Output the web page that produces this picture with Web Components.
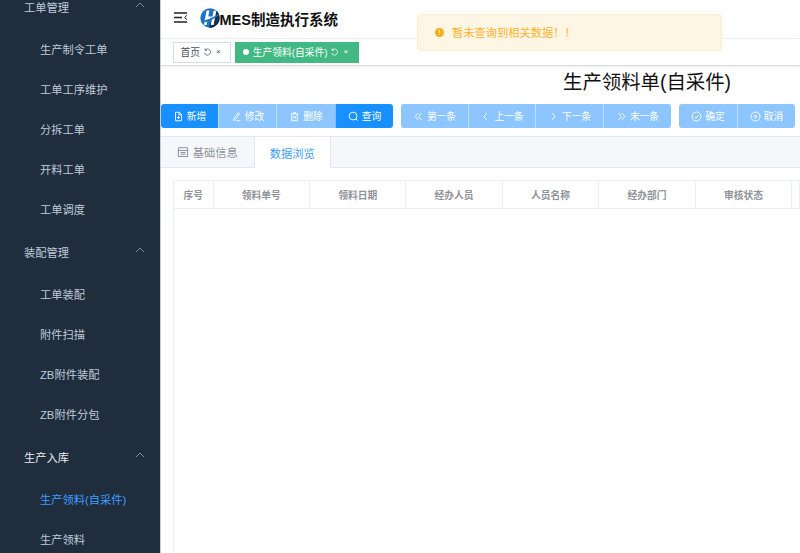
<!DOCTYPE html>
<html lang="zh"><head><meta charset="utf-8"><title>MES</title>
<style>
html,body{margin:0;height:100%;overflow:hidden;background:#fff}
body{font-family:"Liberation Sans","Noto Sans CJK SC",sans-serif;color:#303133}
mes-app{height:553px}
</style></head><body>
<mes-app>
  <mes-sidebar slot="side">
    <mes-group label="工单管理">
      <mes-item>生产制令工单</mes-item><mes-item>工单工序维护</mes-item><mes-item>分拆工单</mes-item><mes-item>开料工单</mes-item><mes-item>工单调度</mes-item>
    </mes-group>
    <mes-group label="装配管理">
      <mes-item>工单装配</mes-item><mes-item>附件扫描</mes-item><mes-item>ZB附件装配</mes-item><mes-item>ZB附件分包</mes-item>
    </mes-group>
    <mes-group label="生产入库" open>
      <mes-item active>生产领料(自采件)</mes-item><mes-item>生产领料</mes-item>
    </mes-group>
  </mes-sidebar>
  <mes-header></mes-header>
  <mes-tags></mes-tags>
  <mes-form-page></mes-form-page>
  <mes-alert>暂未查询到相关数据！！</mes-alert>
</mes-app>
<script>
const icons={
 add:'<path d="M3 1.5h4.5L10 4v7.5H3z"/><path d="M7 1.5V4.5h3M6.5 6v3.5M4.8 7.8h3.4"/>',
 edit:'<path d="M3 9.5 8.5 2l1.7 1.2L5 10.5l-2.2.7zM6 11.5h5"/>',
 del:'<path d="M2 3.5h9M5 3.5V2h3v1.5M3.2 3.5v8h6.6v-8M5.5 6v3M7.5 6v3"/>',
 search:'<circle cx="6" cy="6" r="4.6"/><path d="m9.4 9.4 2 2"/>',
 first:'<path d="M6 2.5 2.5 6.5 6 10.5M10 2.5 6.5 6.5l3.5 4"/>',
 prev:'<path d="M8 2.5 4.5 6.5 8 10.5"/>',
 next:'<path d="m5 2.5 3.5 4-3.5 4"/>',
 last:'<path d="m3 2.5 3.5 4-3.5 4M7 2.5l3.5 4-3.5 4"/>',
 ok:'<circle cx="6.5" cy="6.5" r="5.3"/><path d="m4 6.5 2 2 3-3.5"/>',
 cancel:'<circle cx="6.5" cy="6.5" r="5.3"/><circle cx="6.5" cy="6.5" r="1.5"/>',
 refresh:'<path d="M3 3.2A4.4 4.4 0 1 1 2.2 7M3 .8v2.6h2.6"/>',
 form:'<rect x="1.5" y="2" width="10" height="9.5" rx=".8"/><path d="M1.5 5h10M3.8 7h5.4M3.8 9h5.4"/>'
};
const ico=(n,s=11,w=1.1)=>`<svg width="${s}" height="${s}" viewBox="0 0 13 13" fill="none" stroke="currentColor" stroke-width="${w}" aria-hidden="true">${icons[n]}</svg>`;
function def(name,html){
  customElements.define(name,class extends HTMLElement{
    constructor(){super();this.attachShadow({mode:'open'});}
    connectedCallback(){this.shadowRoot.innerHTML=typeof html==='function'?html(this):html;}
  });
}
def('mes-app',`<style>
:host{display:grid;grid-template-columns:160px 1fr;width:800px;position:relative;overflow:hidden}
.side{display:block;height:553px;overflow:hidden}
.main{min-width:0;height:553px;overflow:hidden;border-left:1px solid #c8ccd2;display:flex;flex-direction:column;box-sizing:border-box}
</style><div class="side"><slot name="side"></slot></div><div class="main"><slot></slot></div>`);
def('mes-sidebar',`<style>
:host{display:block;height:553px;background:#1f2d3d;overflow:hidden}
.in{margin-top:-16px}
</style><div class="in"><slot></slot></div>`);
def('mes-group',h=>`<style>
:host{display:block}
.t{height:45px;display:flex;align-items:center;justify-content:space-between;padding:0 15px 0 24px;font-size:11.25px;color:#bfcbd9}
:host([open]) .t{color:#e8edf2}
svg{display:block;margin-top:-3px}
</style><div class="t"><span>${h.getAttribute('label')}</span><svg width="10" height="6" viewBox="0 0 10 6" fill="none" stroke="#7e8a97" stroke-width="1"><path d="m1 5 4-4 4 4"/></svg></div><slot></slot>`);
def('mes-item',`<style>
:host{display:flex;align-items:center;height:40px;padding-left:40px;font-size:11.25px;color:#bfcbd9}
:host([active]){color:#409eff}
</style><slot></slot>`);
def('mes-header',`<style>
:host{display:flex;align-items:center;height:39px;flex:none;padding:0 0 1px 13px;box-sizing:border-box;border-bottom:1px solid #eef1f4;background:#fff}
.b{display:block;margin:-3px 12px 0 0}
.l{display:block;margin-top:-1px}
b{font-size:14.5px;color:#111;font-weight:700;white-space:nowrap;margin-left:-.5px}
</style>
<svg class="b" width="14" height="11" viewBox="0 0 14 11" fill="none" stroke="#222" stroke-width="1.3"><path d="M0 1h13M0 5.5h8M0 10h13"/><path d="M13 3.3 10.6 5.5 13 7.7" stroke-width="1"/></svg>
<svg class="l" width="20" height="20" viewBox="0 0 20 20"><circle cx="10" cy="10" r="9.7" fill="#1c73c4"/><path d="M11 19.7A9.7 9.7 0 0 0 19.7 10a9.7 9.7 0 0 0-5-8.5L9 19.5z" fill="#15304c"/><path d="M6.6 2.5 3.8 17h2.8l1-5.4h4.2l-1 5.4h2.8l2.8-14.5h-2.8l-1.1 6.1H8.3l1.1-6.1z" fill="#fff"/><path d="M1.5 13C6 12.5 13 9.5 18.5 6l.4 1C14 11.5 7 14.4 2 14.6z" fill="#1c73c4"/></svg>
<b>MES制造执行系统</b>`);
def('mes-tags',`<style>
:host{display:flex;align-items:center;gap:4px;height:27px;flex:none;padding:0 0 0 12px;box-sizing:border-box;background:#fff;border-bottom:1px solid #d8dce5;box-shadow:0 1px 3px rgba(0,0,0,.08);position:relative}
.t{display:flex;align-items:center;height:21px;box-sizing:border-box;border:1px solid #d8dce5;padding:0 9px 0 6.5px;font-size:9.75px;color:#495060;white-space:nowrap;background:#fff}
.t.on{background:#42b983;border-color:#42b983;color:#fff;padding:0 10px 0 7px}
.d{width:6px;height:6px;border-radius:50%;background:#fff;margin-right:4px}
svg{margin-left:3px;display:block}
.x{margin-left:4px;font-size:8px;line-height:1}
</style>
<div class="t"><span>首页</span>${ico('refresh',9)}<span class="x">×</span></div>
<div class="t on"><i class="d"></i><span>生产领料(自采件)</span>${ico('refresh',9)}<span class="x">×</span></div>`);
def('mes-btn',h=>`<style>
:host{display:inline-flex;align-items:center;justify-content:center;gap:3px;height:24px;box-sizing:border-box;width:${h.getAttribute('w')}px;font-size:9.75px;color:#fff;background:#8cc5ff;border-left:1px solid rgba(255,255,255,.45)}
:host([on]){background:#1890ff}
:host(:first-child){border-left:0}
svg{display:block}
</style>${ico(h.getAttribute('i'))}<slot></slot>`);
def('mes-btn-group',`<style>
:host{display:flex;border-radius:3px;overflow:hidden}
</style><slot></slot>`);
def('mes-form-page',`<style>
:host{display:flex;flex-direction:column;flex:1;min-height:0;background:#fff}
h1{margin:0;height:38px;box-sizing:border-box;padding-top:3px;padding-left:402px;font-size:19.4px;line-height:26px;font-weight:400;color:#111;white-space:nowrap}
.bar{display:flex;gap:8px;height:24px;flex:none}
.tabs{margin-top:8px;height:32px;flex:none;display:flex;box-sizing:border-box;background:#f5f7fa;border:1px solid #e4e7ed;border-width:1px 0;}
.tab{display:flex;align-items:center;justify-content:center;gap:4px;font-size:11.25px;color:#909399;box-sizing:border-box}
.tab.a{width:92.5px}
.tab.b{width:77.5px;background:#fff;color:#409eff;border:1px solid #e4e7ed;border-width:0 1px;margin-bottom:-1px}
.body{flex:1;min-height:0;padding:12px 0 0 12px;box-sizing:border-box}
.tw{height:100%;border-left:1px solid #ebeef5;box-sizing:border-box;display:flex;flex-direction:column}
.hd{display:grid;grid-template-columns:39.5px repeat(6,96.45px) 1fr;height:29px;flex:none;box-sizing:border-box;border:1px solid #ebeef5;border-width:1px 0}
.hd span{display:flex;align-items:center;justify-content:center;font-size:9.75px;font-weight:700;color:#909399;border-right:1px solid #ebeef5;background:#fff}
</style>
<h1>生产领料单(自采件)</h1>
<div class="bar">
 <mes-btn-group><mes-btn w="57" i="add" on>新增</mes-btn><mes-btn w="58" i="edit">修改</mes-btn><mes-btn w="59" i="del">删除</mes-btn><mes-btn w="58" i="search" on>查询</mes-btn></mes-btn-group>
 <mes-btn-group><mes-btn w="67" i="first">第一条</mes-btn><mes-btn w="67" i="prev">上一条</mes-btn><mes-btn w="68" i="next">下一条</mes-btn><mes-btn w="68" i="last">末一条</mes-btn></mes-btn-group>
 <mes-btn-group><mes-btn w="58" i="ok">确定</mes-btn><mes-btn w="58" i="cancel">取消</mes-btn></mes-btn-group>
</div>
<div class="tabs"><div class="tab a">${ico('form',12)}<span>基础信息</span></div><div class="tab b">数据浏览</div></div>
<div class="body"><div class="tw"><div class="hd"><span>序号</span><span>领料单号</span><span>领料日期</span><span>经办人员</span><span>人员名称</span><span>经办部门</span><span>审核状态</span><span></span></div></div></div>`);
def('mes-alert',`<style>
:host{position:absolute;left:417px;top:14px;width:305px;height:37px;box-sizing:border-box;display:flex;align-items:center;gap:8px;padding:0 0 1px 17px;background:#fef6e5;border:1px solid #fdeecb;border-radius:3px;font-size:11.25px;z-index:5}
svg{display:block}
span{color:#fbb32c}
</style><svg width="9" height="9" viewBox="0 0 10 10"><circle cx="5" cy="5" r="5" fill="#f9ae14"/><path d="M5 2.2v3.4M5 6.8v1" stroke="#fdf6ec" stroke-width="1.1"/></svg><span><slot></slot></span>`);
</script>
</body></html>
